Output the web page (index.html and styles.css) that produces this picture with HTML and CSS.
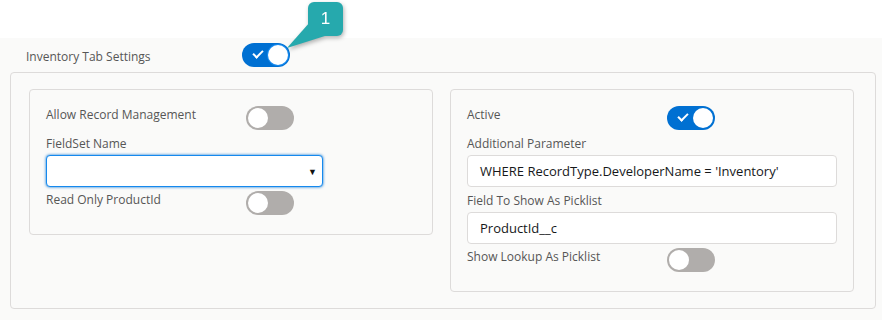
FILE: index.html
```html
<!DOCTYPE html>
<html lang="en">
<head>
    <meta charset="UTF-8">
    <title>Inventory Tab Settings</title>
    <link rel="stylesheet" href="styles.css">
</head>
<body>
    <div class="top-space"></div>
    <section class="settings">
        <div class="settings-head">
            <span class="head-label">Inventory Tab Settings</span>
            <span class="toggle on ring"><span class="knob"></span></span>
        </div>

        <!-- callout marker -->
        <div class="callout">
            <svg class="callout-tail" width="70" height="60" viewBox="0 0 70 60">
                <polygon points="32,22 50,35 9,48" fill="#26a9ad"/>
            </svg>
            <div class="callout-badge">1</div>
        </div>

        <div class="panel">
            <div class="card">
                <div class="row">
                    <span class="label">Allow Record Management</span>
                    <span class="toggle"><span class="knob"></span></span>
                </div>
                <div class="field-label">FieldSet Name</div>
                <div class="select">
                    <span class="arrow">&#9660;</span>
                </div>
                <div class="row after-input">
                    <span class="label">Read Only ProductId</span>
                    <span class="toggle"><span class="knob"></span></span>
                </div>
            </div>
            <div class="card">
                <div class="row">
                    <span class="label">Active</span>
                    <span class="toggle on"><span class="knob"></span></span>
                </div>
                <div class="field-label">Additional Parameter</div>
                <div class="input">WHERE RecordType.DeveloperName = 'Inventory'</div>
                <div class="field-label">Field To Show As Picklist</div>
                <div class="input">ProductId__c</div>
                <div class="row after-input">
                    <span class="label">Show Lookup As Picklist</span>
                    <span class="toggle"><span class="knob"></span></span>
                </div>
            </div>
        </div>
    </section>
</body>
</html>
```

FILE: styles.css
```css
:root {
    --bg: #fafaf9;
    --border: #dddbda;
    --blue: #0070d2;
    --off: #b0adab;
    --label: #565656;
    --text: #16181a;
}
html, body {
    margin: 0;
    padding: 0;
    background: #fff;
    font-family: 'Open Sans', 'Liberation Sans', Arial, sans-serif;
    color: var(--text);
}
.top-space {
    height: 38px;
}
.settings {
    position: relative;
    background: var(--bg);
    padding: 0 6px 12px 10px;
    min-height: 282px;
    box-sizing: border-box;
}
.settings-head {
    display: flex;
    align-items: center;
    height: 34px;
    padding-left: 16px;
    box-sizing: border-box;
}
.head-label {
    width: 216px;
    font-size: 12px;
    color: var(--label);
    padding-top: 2px;
}
.toggle {
    position: relative;
    display: inline-block;
    width: 48px;
    height: 24px;
    border-radius: 12px;
    background: var(--off);
    flex: none;
}
.toggle .knob {
    position: absolute;
    top: 2px;
    left: 2px;
    width: 20px;
    height: 20px;
    border-radius: 50%;
    background: #fff;
}
.toggle.on {
    background: var(--blue);
}
.toggle.on .knob {
    left: 26px;
}
.toggle.on::before {
    content: "";
    position: absolute;
    left: 11px;
    top: 7px;
    width: 8px;
    height: 4px;
    border-left: 2px solid #fff;
    border-bottom: 2px solid #fff;
    transform: rotate(-45deg);
}
.toggle.ring .knob {
    box-shadow: 0 0 0 1px #1589ee;
}
.callout {
    position: absolute;
    left: 278px;
    top: -38px;
    width: 70px;
    height: 60px;
    filter: drop-shadow(1px 2px 2px rgba(0, 0, 0, 0.3));
}
.callout-tail {
    position: absolute;
    left: 0;
    top: 0;
}
.callout-badge {
    position: absolute;
    left: 30px;
    top: 2px;
    width: 35px;
    height: 34px;
    border-radius: 6px;
    background: #26a9ad;
    color: #fff;
    font-family: 'Liberation Sans', Arial, sans-serif;
    font-size: 17px;
    line-height: 34px;
    text-align: center;
}
.panel {
    display: grid;
    grid-template-columns: 1fr 1fr;
    gap: 17px;
    align-items: start;
    border: 1px solid var(--border);
    border-radius: 4px;
    padding: 16px 21px 16px 18px;
}
.card {
    border: 1px solid var(--border);
    border-radius: 4px;
    padding: 16px 16px 19px 16px;
}
.row {
    display: flex;
    align-items: flex-start;
    height: 24px;
}
.row.after-input {
    margin-top: 4px;
}
.label {
    width: 200px;
    font-size: 12px;
    line-height: 16px;
    padding-top: 1px;
    color: var(--label);
}
.field-label {
    font-size: 12px;
    line-height: 16px;
    color: var(--label);
    margin: 5px 0 4px 0;
    position: relative;
    top: 1px;
}
.select {
    position: relative;
    width: 277px;
    height: 32px;
    box-sizing: border-box;
    background: #fff;
    border: 1px solid #1589ee;
    border-radius: 4px;
    box-shadow: 0 0 3px #0070d2;
}
.select .arrow {
    position: absolute;
    right: 5px;
    top: 9px;
    font-size: 9px;
    color: #111;
}
.input {
    height: 32px;
    box-sizing: border-box;
    background: #fff;
    border: 1px solid var(--border);
    border-radius: 4px;
    padding-left: 12px;
    font-size: 13px;
    line-height: 30px;
    color: var(--text);
}
```
